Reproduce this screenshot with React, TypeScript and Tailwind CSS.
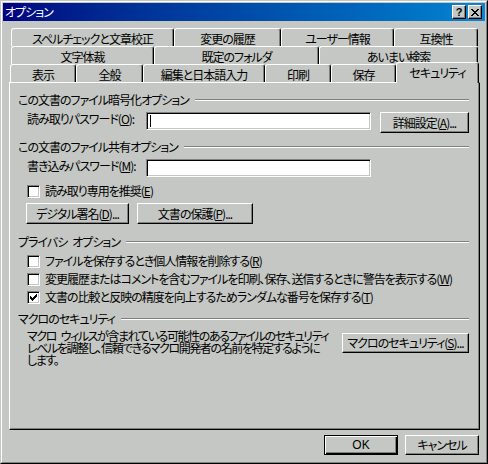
import React from "react";

const U = ({ c }: { c: string }) => (
  <span className="underline underline-offset-[1px] decoration-1">{c}</span>
);

function Header({ title }: { title: string }) {
  return (
    <div className="flex items-center h-[14px] leading-[14px]">
      <span className="whitespace-pre">{title}</span>
      <div className="flex-1 ml-[6px] h-[2px] border-t border-b border-t-[#808080] border-b-white" />
    </div>
  );
}

const CHECK = [
  "......x",
  ".....xx",
  "x...xxx",
  "xx.xxx.",
  "xxxxx..",
  ".xxx...",
  "..x....",
];

function Check({ checked }: { checked?: boolean }) {
  return (
    <div className="w-[13px] h-[13px] shrink-0 bg-white border border-t-[#808080] border-l-[#808080] border-r-white border-b-white shadow-[inset_1px_1px_0_#000,inset_-1px_-1px_0_#c4c7c3] flex items-center justify-center">
      {checked && (
        <svg width="7" height="7" viewBox="0 0 7 7" shapeRendering="crispEdges">
          {CHECK.flatMap((row, y) =>
            row.split("").map((ch, x) =>
              ch === "x" ? <rect key={`${x}-${y}`} x={x} y={y} width="1" height="1" fill="#000" /> : null
            )
          )}
        </svg>
      )}
    </div>
  );
}

function CheckRow({ checked, children }: { checked?: boolean; children: React.ReactNode }) {
  return (
    <div className="flex items-center h-[14px] ml-[9px] gap-[5px]">
      <Check checked={checked} />
      <span className="whitespace-nowrap leading-[14px]">{children}</span>
    </div>
  );
}

function Input({ caret }: { caret?: boolean }) {
  return (
    <div className="w-[225px] h-[18px] shrink-0 bg-white border border-t-[#808080] border-l-[#808080] border-r-white border-b-white shadow-[inset_1px_1px_0_#000,inset_-1px_-1px_0_#c4c7c3] flex items-center pl-[3px]">
      {caret && <div className="w-[1px] h-[12px] bg-black" />}
    </div>
  );
}

function Btn({ className, children }: { className: string; children: React.ReactNode }) {
  return (
    <div
      className={`${className} shrink-0 flex items-center justify-center whitespace-nowrap bg-[#c4c7c3] border border-t-white border-l-white border-r-black border-b-black shadow-[inset_-1px_-1px_0_#808080] leading-[14px]`}
    >
      {children}
    </div>
  );
}

function Tab({ className, label, sel }: { className: string; label: string; sel?: boolean }) {
  return (
    <div
      className={`${className} shrink-0 flex justify-center pt-[3px] leading-[14px] whitespace-nowrap border-l border-t border-r border-l-white border-t-white border-r-black rounded-t-[3px] shadow-[inset_-1px_0_0_#808080] bg-[#c4c7c3] ${
        sel ? "relative z-10 -mt-[2px] h-[21px]" : "h-[18px]"
      }`}
    >
      {label}
    </div>
  );
}

const XGLYPH = ["xx....xx", ".xx..xx.", "..xxxx..", "...xx...", "..xxxx..", ".xx..xx.", "xx....xx"];

function TitleBtn({ children }: { children: React.ReactNode }) {
  return (
    <div className="w-[14px] h-[14px] flex items-center justify-center bg-[#c4c7c3] border border-t-white border-l-white border-r-black border-b-black shadow-[inset_-1px_-1px_0_#808080]">
      {children}
    </div>
  );
}

export default function App() {
  return (
    <div className="w-[488px] h-[464px] border border-t-[#c4c7c3] border-l-[#c4c7c3] border-r-black border-b-black font-['Noto_Sans_CJK_JP',sans-serif] text-[12px] tracking-[-1px] text-black [font-feature-settings:'palt']">
      <div className="h-full border border-t-white border-l-white border-r-[#808080] border-b-[#808080] bg-[#c4c7c3] p-[1px] flex flex-col">
        {/* title bar */}
        <div className="h-[18px] shrink-0 flex items-center bg-linear-to-r from-[#000080] to-[#1084d0] pl-[2px]">
          <span className="text-white leading-[14px]">オプション</span>
          <div className="ml-auto mr-[3px] flex gap-[2px]">
            <TitleBtn>
              <span className="font-['Liberation_Sans',sans-serif] font-bold text-[11px] leading-[11px] tracking-normal">?</span>
            </TitleBtn>
            <TitleBtn>
              <svg width="8" height="7" viewBox="0 0 8 7" shapeRendering="crispEdges">
                {XGLYPH.flatMap((row, y) =>
                  row.split("").map((ch, x) =>
                    ch === "x" ? <rect key={`${x}-${y}`} x={x} y={y} width="1" height="1" fill="#000" /> : null
                  )
                )}
              </svg>
            </TitleBtn>
          </div>
        </div>

        {/* body */}
        <div className="flex flex-col pl-[6px] pr-[5px] mt-[7px]">
          {/* tab rows */}
          <div className="flex h-[18px] pl-[2px]">
            <Tab className="w-[163px]" label="スペルチェックと文章校正" />
            <Tab className="w-[107px]" label="変更の履歴" />
            <Tab className="w-[113px]" label="ユーザー情報" />
            <Tab className="w-[84px]" label="互換性" />
          </div>
          <div className="flex h-[18px] pl-[2px]">
            <Tab className="w-[143px]" label="文字体裁" />
            <Tab className="w-[165px]" label="既定のフォルダ" />
            <Tab className="w-[159px]" label="あいまい検索" />
          </div>
          <div className="flex items-start h-[18px] pl-[1px]">
            <Tab className="w-[66px]" label="表示" />
            <Tab className="w-[67px]" label="全般" />
            <Tab className="w-[122px]" label="編集と日本語入力" />
            <Tab className="w-[66px]" label="印刷" />
            <Tab className="w-[65px]" label="保存" />
            <Tab className="w-[83px]" label="セキュリティ" sel />
          </div>

          {/* panel */}
          <div className="h-[348px] flex flex-col border border-t-white border-l-white border-r-black border-b-black shadow-[inset_-1px_-1px_0_#808080] pl-[8px] pr-[10px]">
            <div className="mt-[10px]">
              <Header title="この文書のファイル暗号化オプション" />
            </div>
            <div className="mt-[5px] flex items-start h-[21px]">
              <span className="ml-[9px] w-[119px] shrink-0 leading-[14px] whitespace-nowrap">
                読み取りパスワード(<U c="O" />):
              </span>
              <Input caret />
              <Btn className="ml-[9px] w-[89px] h-[21px]">
                詳細設定(<U c="A" />)...
              </Btn>
            </div>

            <div className="mt-[7px]">
              <Header title="この文書のファイル共有オプション" />
            </div>
            <div className="mt-[5px] flex items-start h-[18px]">
              <span className="ml-[9px] w-[119px] shrink-0 leading-[14px] whitespace-nowrap">
                書き込みパスワード(<U c="M" />):
              </span>
              <Input />
            </div>
            <div className="mt-[7px]">
              <CheckRow>
                読み取り専用を推奨(<U c="E" />)
              </CheckRow>
            </div>
            <div className="mt-[5px] ml-[8px] flex gap-[8px]">
              <Btn className="w-[103px] h-[21px]">
                デジタル署名(<U c="D" />)...
              </Btn>
              <Btn className="w-[116px] h-[21px]">
                文書の保護(<U c="P" />)...
              </Btn>
            </div>

            <div className="mt-[11px]">
              <Header title={"プライバシ\u2002オプション"} />
            </div>
            <div className="mt-[5px]">
              <CheckRow>
                ファイルを保存するとき個人情報を削除する(<U c="R" />)
              </CheckRow>
            </div>
            <div className="mt-[4px]">
              <CheckRow>
                変更履歴またはコメントを含むファイルを印刷、保存、送信するときに警告を表示する(<U c="W" />)
              </CheckRow>
            </div>
            <div className="mt-[4px]">
              <CheckRow checked>
                文書の比較と反映の精度を向上するためランダムな番号を保存する(<U c="T" />)
              </CheckRow>
            </div>

            <div className="mt-[8px]">
              <Header title="マクロのセキュリティ" />
            </div>
            <div className="mt-[4px] flex items-start justify-between">
              <p className="ml-[9px] leading-[12px] whitespace-nowrap tracking-[-1.4px]">
                {"マクロ\u2002ウィルスが含まれている可能性のあるファイルのセキュリティ"}
                <br />
                レベルを調整し、信頼できるマクロ開発者の名前を特定するように
                <br />
                します。
              </p>
              <Btn className="mt-[3px] w-[127px] h-[20px]">
                マクロのセキュリティ(<U c="S" />)...
              </Btn>
            </div>
          </div>

          {/* bottom buttons */}
          <div className="mt-[5px] flex justify-end gap-[7px] pr-[1px]">
            <div className="w-[74px] h-[20px] flex items-center justify-center border border-black shadow-[inset_1px_1px_0_#fff,inset_-1px_-1px_0_#000,inset_-2px_-2px_0_#808080] leading-[14px] tracking-normal font-['Liberation_Sans',sans-serif]">
              OK
            </div>
            <Btn className="w-[74px] h-[20px]">キャンセル</Btn>
          </div>
        </div>
      </div>
    </div>
  );
}
